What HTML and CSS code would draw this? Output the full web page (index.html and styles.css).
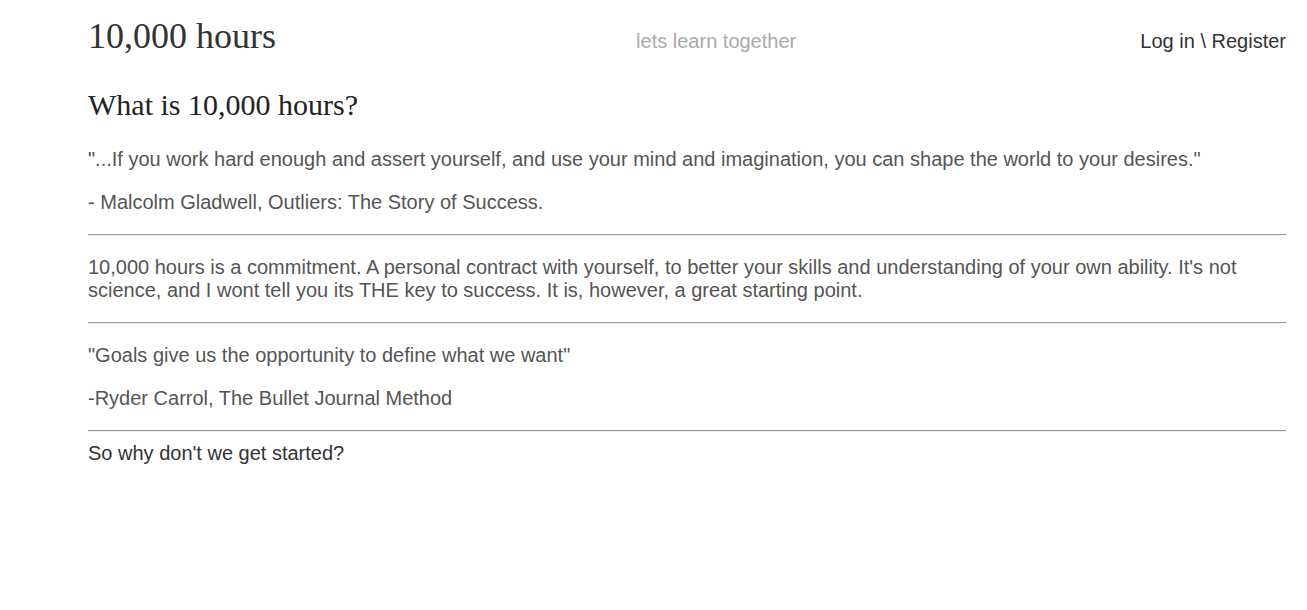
FILE: index.html
```html
<!DOCTYPE html>
<html lang="en">
<head>
<meta charset="utf-8">
<title>10,000 hours</title>
<link rel="stylesheet" href="styles.css">
</head>
<body>
<div class="page">
  <header class="header">
    <h1 class="brand">10,000 hours</h1>
    <span class="tagline">lets learn together</span>
    <nav class="auth"><a href="#">Log in</a> \ <a href="#">Register</a></nav>
  </header>
  <main class="content">
    <h2 class="section-title">What is 10,000 hours?</h2>
    <p class="text">"...If you work hard enough and assert yourself, and use your mind and imagination, you can shape the world to your desires."</p>
    <p class="text">- Malcolm Gladwell, Outliers: The Story of Success.</p>
    <hr class="rule">
    <p class="text">10,000 hours is a commitment. A personal contract with yourself, to better your skills and understanding of your own ability. It's not science, and I wont tell you its THE key to success. It is, however, a great starting point.</p>
    <hr class="rule">
    <p class="text">"Goals give us the opportunity to define what we want"</p>
    <p class="text">-Ryder Carrol, The Bullet Journal Method</p>
    <hr class="rule">
    <div class="cta">So why don't we get started?</div>
  </main>
</div>
</body>
</html>
```

FILE: styles.css
```css
html, body {
  margin: 0;
  padding: 0;
  background: #fff;
}

.page {
  padding: 0 21px 0 88px;
  font-family: "Liberation Sans", Arial, sans-serif;
  font-size: 20px;
  color: #555;
}

.header {
  display: flex;
  justify-content: space-between;
  align-items: baseline;
  padding-top: 14px;
}

.brand {
  margin: 0;
  font-family: "Liberation Serif", "Times New Roman", serif;
  font-size: 36px;
  font-weight: normal;
  color: #333;
  line-height: 44px;
}

.tagline {
  color: #aaa;
  margin-left: 16px;
}

.auth {
  color: #333;
}

.auth a {
  color: #333;
  text-decoration: none;
}

.section-title {
  margin: 29px 0 0;
  font-family: "Liberation Serif", "Times New Roman", serif;
  font-size: 30px;
  font-weight: normal;
  color: #222;
  line-height: 36px;
}

.text {
  margin: 20px 0;
  line-height: 23px;
}

.section-title + .text {
  margin-top: 25px;
}

.rule {
  margin: 8px 0;
  border: 0;
  border-top: 1px solid #9a9a9a;
  border-bottom: 1px solid #eee;
  height: 0;
}

.text + .text + .rule {
  margin-top: 9px;
}

.cta {
  color: #333;
  line-height: 23px;
  padding-top: 2px;
}
```
